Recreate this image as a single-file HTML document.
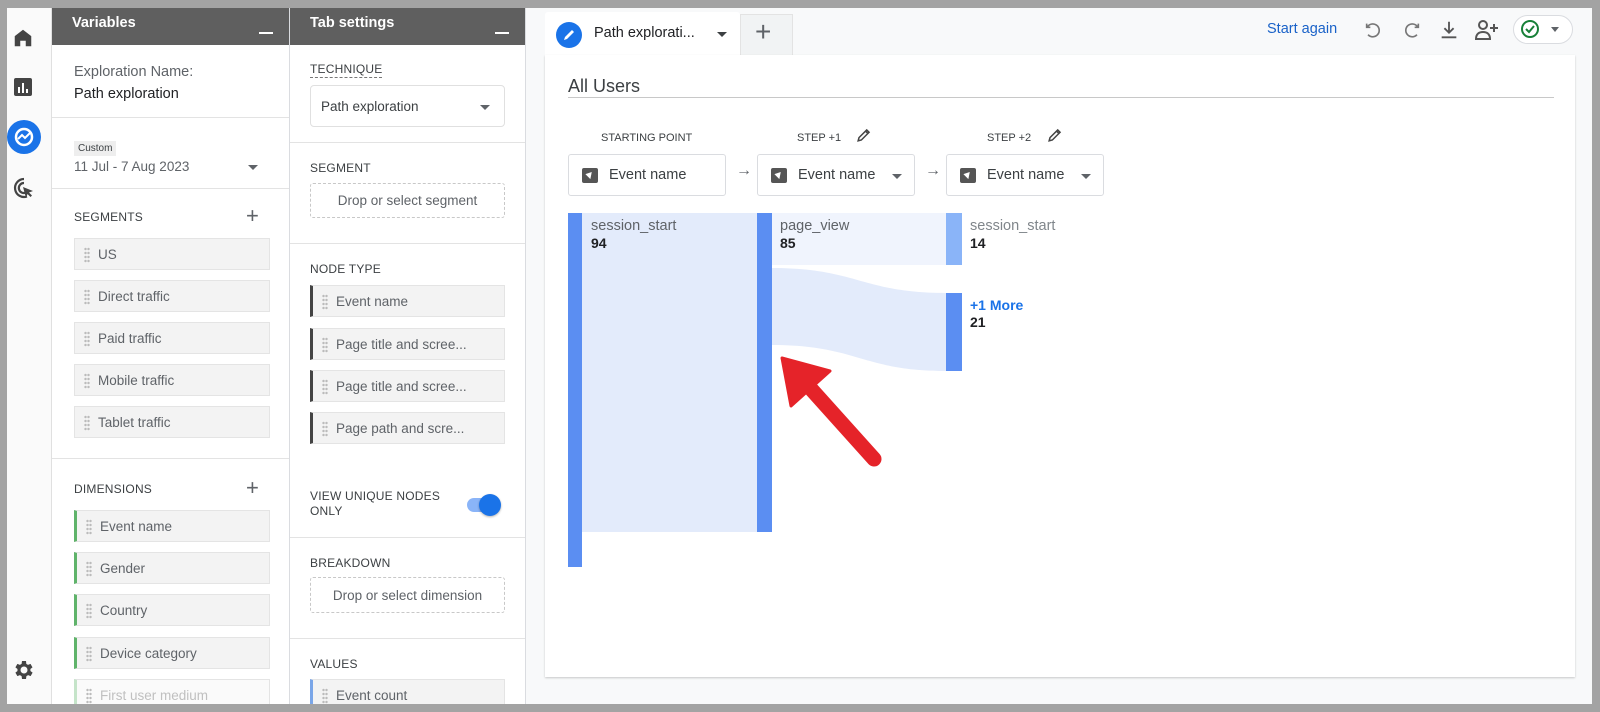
<!DOCTYPE html>
<html><head><meta charset="utf-8"><style>
*{box-sizing:border-box;margin:0;padding:0}
body{width:1600px;height:712px;background:#a3a3a3;font-family:"Liberation Sans",Arial,sans-serif;position:relative;overflow:hidden;color:#3c4043}
.abs{position:absolute}
#frame{position:absolute;left:7px;top:8px;width:1585px;height:696px;background:#f8f9fa;overflow:hidden}
.nav{left:0;top:0;width:45px;height:696px;background:#fafafa;border-right:1px solid #e0e0e0}
.panel{top:0;height:696px;background:#fff;border-right:1px solid #dadce0}
.hdr{position:absolute;left:0;top:0;right:0;height:37px;background:#5f5f5f;color:#fff;font-weight:bold;font-size:14.5px;padding:7px 0 0 20px}
.hdr i{position:absolute;right:16px;top:24px;width:14px;height:2px;background:#fff}
.lbl{position:absolute;font-size:12px;color:#3c4043;letter-spacing:.2px}
.item{position:absolute;height:32px;background:#f3f3f3;border:1px solid #e4e4e4;font-size:13.5px;color:#5f6368;padding:8px 0 0 23px}
.item:before{content:"";position:absolute;left:9px;top:8px;width:6px;height:16px;background:radial-gradient(circle,#bbb 1px,transparent 1.4px) 0 0/3px 4px}
.dim{border-left:3px solid #5fb36a}
.nt{border-left:3px solid #444}
.dv{position:absolute;height:1px;background:#e3e3e3}
.drop{position:absolute;border:1px dashed #c8c8c8;border-radius:3px;font-size:13.5px;color:#5f6368;text-align:center}
.ev{position:absolute;top:146px;height:42px;background:#fff;border:1px solid #dadce0;border-radius:3px;font-size:14.5px;color:#3c4043;padding:12px 0 0 40px}
.ev b{position:absolute;left:13px;top:13px;width:16px;height:15px;background:#555;border-radius:2px}
.ev b:after{content:"";position:absolute;left:5px;top:3px;border-left:6px solid #fff;border-bottom:4px solid transparent;border-top:3px solid transparent;transform:rotate(-45deg)}
.ev s{position:absolute;right:12px;top:19px;border-left:5px solid transparent;border-right:5px solid transparent;border-top:5px solid #5f6368}
.st{position:absolute;font-size:11px;color:#3c4043}
</style></head><body>
<div id="frame">
 <div class="abs nav">
  <svg class="abs" style="left:5px;top:19px" width="22" height="22" viewBox="0 0 24 24"><path d="M12 3L3 10v11h6v-6h6v6h6V10z" fill="#444"/></svg>
  <svg class="abs" style="left:6px;top:69px" width="20" height="20" viewBox="0 0 20 20"><rect x="1" y="1" width="18" height="18" rx="2" fill="#444"/><rect x="5" y="10" width="2" height="6" fill="#fff"/><rect x="9" y="6" width="2" height="10" fill="#fff"/><rect x="13" y="12" width="2" height="4" fill="#fff"/></svg>
  <div class="abs" style="left:0;top:112px;width:34px;height:34px;border-radius:50%;background:#1a73e8"></div>
  <svg class="abs" style="left:5px;top:117px" width="24" height="24" viewBox="0 0 24 24"><circle cx="12" cy="12" r="8" fill="none" stroke="#fff" stroke-width="2.5"/><path d="M6 14l4-4 3 3 5-5" fill="none" stroke="#fff" stroke-width="2"/></svg>
  <svg class="abs" style="left:5px;top:168px" width="24" height="24" viewBox="0 0 24 24"><path d="M12 3a9 9 0 1 0 3 17.5M12 7a5 5 0 1 0 2 9.5" fill="none" stroke="#444" stroke-width="2.2"/><path d="M11 11l10 4-4 1.5 3 3-1.5 1.5-3-3-1.5 4z" fill="#444"/></svg>
  <svg class="abs" style="left:4px;top:650px" width="24" height="24" viewBox="0 0 24 24"><path fill="#444" d="M19.4 13a7.5 7.5 0 0 0 0-2l2.1-1.6-2-3.5-2.5 1a7 7 0 0 0-1.7-1L15 3h-4l-.4 2.9a7 7 0 0 0-1.7 1l-2.5-1-2 3.5L6.5 11a7.5 7.5 0 0 0 0 2l-2.1 1.6 2 3.5 2.5-1a7 7 0 0 0 1.7 1L11 21h4l.4-2.9a7 7 0 0 0 1.7-1l2.5 1 2-3.5zM13 15.5a3.5 3.5 0 1 1 0-7 3.5 3.5 0 0 1 0 7z"/></svg>
 </div>

 <div class="abs panel" style="left:45px;width:238px">
  <div class="hdr">Variables<i></i></div>
  <div class="abs" style="left:22px;top:56px;font-size:14.5px;color:#5f6368">Exploration Name:</div>
  <div class="abs" style="left:22px;top:78px;font-size:14.5px;color:#202124">Path exploration</div>
  <div class="dv" style="left:0;right:0;top:109px"></div>
  <div class="abs" style="left:22px;top:133px;font-size:10px;background:#eee;padding:2px 4px;color:#3c4043">Custom</div>
  <div class="abs" style="left:22px;top:151px;font-size:13.5px;color:#5f6368">11 Jul - 7 Aug 2023</div>
  <div class="abs" style="left:196px;top:157px;border-left:5px solid transparent;border-right:5px solid transparent;border-top:5px solid #5f6368"></div>
  <div class="dv" style="left:0;right:0;top:180px"></div>
  <div class="lbl" style="left:22px;top:202px">SEGMENTS</div>
  <div class="abs" style="left:194px;top:199px;font-size:22px;color:#5f6368;line-height:18px">+</div>
  <div class="item" style="left:22px;top:230px;width:196px">US</div>
  <div class="item" style="left:22px;top:272px;width:196px">Direct traffic</div>
  <div class="item" style="left:22px;top:314px;width:196px">Paid traffic</div>
  <div class="item" style="left:22px;top:356px;width:196px">Mobile traffic</div>
  <div class="item" style="left:22px;top:398px;width:196px">Tablet traffic</div>
  <div class="dv" style="left:0;right:0;top:450px"></div>
  <div class="lbl" style="left:22px;top:474px">DIMENSIONS</div>
  <div class="abs" style="left:194px;top:471px;font-size:22px;color:#5f6368;line-height:18px">+</div>
  <div class="item dim" style="left:22px;top:502px;width:196px">Event name</div>
  <div class="item dim" style="left:22px;top:544px;width:196px">Gender</div>
  <div class="item dim" style="left:22px;top:586px;width:196px">Country</div>
  <div class="item dim" style="left:22px;top:629px;width:196px">Device category</div>
  <div class="item dim" style="left:22px;top:671px;width:196px;color:#c0c0c0;border-left-color:#c5e4c9;background:#fafafa">First user medium</div>
 </div>

 <div class="abs panel" style="left:283px;width:236px">
  <div class="hdr">Tab settings<i></i></div>
  <div class="lbl" style="left:20px;top:54px;border-bottom:1px dashed #777;padding-bottom:1px">TECHNIQUE</div>
  <div class="abs" style="left:20px;top:77px;width:195px;height:42px;border:1px solid #e0e0e0;border-radius:4px;font-size:13.5px;color:#3c4043;padding:13px 0 0 10px">Path exploration<span style="position:absolute;right:14px;top:19px;border-left:5px solid transparent;border-right:5px solid transparent;border-top:5px solid #5f6368"></span></div>
  <div class="dv" style="left:0;right:0;top:134px"></div>
  <div class="lbl" style="left:20px;top:153px">SEGMENT</div>
  <div class="drop" style="left:20px;top:175px;width:195px;height:35px;padding-top:9px">Drop or select segment</div>
  <div class="dv" style="left:0;right:0;top:235px"></div>
  <div class="lbl" style="left:20px;top:254px">NODE TYPE</div>
  <div class="item nt" style="left:20px;top:277px;width:195px">Event name</div>
  <div class="item nt" style="left:20px;top:320px;width:195px">Page title and scree...</div>
  <div class="item nt" style="left:20px;top:362px;width:195px">Page title and scree...</div>
  <div class="item nt" style="left:20px;top:404px;width:195px">Page path and scre...</div>
  <div class="lbl" style="left:20px;top:481px;line-height:15px">VIEW UNIQUE NODES<br>ONLY</div>
  <div class="abs" style="left:177px;top:490px;width:30px;height:14px;border-radius:7px;background:#8ab4f8"></div>
  <div class="abs" style="left:189px;top:486px;width:22px;height:22px;border-radius:50%;background:#1a73e8;box-shadow:0 1px 2px rgba(0,0,0,.3)"></div>
  <div class="dv" style="left:0;right:0;top:529px"></div>
  <div class="lbl" style="left:20px;top:548px">BREAKDOWN</div>
  <div class="drop" style="left:20px;top:569px;width:195px;height:36px;padding-top:10px">Drop or select dimension</div>
  <div class="dv" style="left:0;right:0;top:630px"></div>
  <div class="lbl" style="left:20px;top:649px">VALUES</div>
  <div class="item" style="left:20px;top:671px;width:195px;border-left:3px solid #7aa6e8">Event count</div>
 </div>

 <!-- tabs -->
 <div class="abs" style="left:538px;top:4px;width:195px;height:44px;background:#fff;border-radius:3px 3px 0 0"></div>
 <div class="abs" style="left:549px;top:14px;width:26px;height:26px;border-radius:50%;background:#1a73e8"></div>
 <svg class="abs" style="left:555px;top:20px" width="14" height="14" viewBox="0 0 14 14"><path d="M2 12l1-3 7-7 2 2-7 7z" fill="#fff"/></svg>
 <div class="abs" style="left:587px;top:17px;font-size:14.5px;color:#202124">Path explorati...</div>
 <div class="abs" style="left:710px;top:24px;border-left:5px solid transparent;border-right:5px solid transparent;border-top:5px solid #3c4043"></div>
 <div class="abs" style="left:733px;top:6px;width:53px;height:42px;background:#f1f3f4;border:1px solid #e3e3e3;border-bottom:none"></div>
 <div class="abs" style="left:748px;top:8px;font-size:28px;color:#5f6368;font-weight:300">+</div>
 <div class="abs" style="left:1260px;top:13px;font-size:14.5px;color:#1a62c8">Start again</div>
 <svg class="abs" style="left:1356px;top:12px" width="22" height="22" viewBox="0 0 24 24"><path d="M8 8H4V4M4.5 8a7 7 0 1 1 1 8" fill="none" stroke="#777" stroke-width="1.8"/></svg>
 <svg class="abs" style="left:1393px;top:12px" width="22" height="22" viewBox="0 0 24 24"><path d="M16 8h4V4M19.5 8a7 7 0 1 0-1 8" fill="none" stroke="#777" stroke-width="1.8"/></svg>
 <svg class="abs" style="left:1431px;top:11px" width="22" height="22" viewBox="0 0 24 24"><path d="M12 3v12M7 10l5 5 5-5M4 20h16" fill="none" stroke="#555" stroke-width="2"/></svg>
 <svg class="abs" style="left:1467px;top:11px" width="26" height="22" viewBox="0 0 26 22"><circle cx="9" cy="6" r="4" fill="none" stroke="#555" stroke-width="2"/><path d="M2 20c0-5 3-7 7-7s7 2 7 7z" fill="none" stroke="#555" stroke-width="2"/><path d="M20 5v8M16 9h8" stroke="#555" stroke-width="2"/></svg>
 <div class="abs" style="left:1506px;top:7px;width:60px;height:29px;border:1px solid #dadce0;border-radius:15px;background:#fff"></div>
 <svg class="abs" style="left:1513px;top:11px" width="20" height="20" viewBox="0 0 20 20"><circle cx="10" cy="10" r="8" fill="none" stroke="#188038" stroke-width="2"/><path d="M6 10l3 3 5-6" fill="none" stroke="#188038" stroke-width="2"/></svg>
 <div class="abs" style="left:1544px;top:19px;border-left:4px solid transparent;border-right:4px solid transparent;border-top:5px solid #5f6368"></div>

 <!-- card -->
 <div class="abs" style="left:538px;top:47px;width:1030px;height:622px;background:#fff;box-shadow:0 1px 2px rgba(0,0,0,.2)"></div>
 <div class="abs" style="left:561px;top:68px;font-size:18px;color:#3c4043">All Users</div>
 <div class="abs" style="left:561px;top:89px;width:986px;height:1px;background:#c8c8c8"></div>
 <div class="st" style="left:594px;top:124px">STARTING POINT</div>
 <div class="st" style="left:790px;top:124px">STEP +1</div>
 <svg class="abs" style="left:849px;top:120px" width="15" height="15" viewBox="0 0 14 14"><path d="M2 12l.8-3L10 1.8 12.2 4 5 11.2zM9 3l2 2" fill="none" stroke="#444" stroke-width="1.4"/></svg>
 <div class="st" style="left:980px;top:124px">STEP +2</div>
 <svg class="abs" style="left:1040px;top:120px" width="15" height="15" viewBox="0 0 14 14"><path d="M2 12l.8-3L10 1.8 12.2 4 5 11.2zM9 3l2 2" fill="none" stroke="#444" stroke-width="1.4"/></svg>
 <div class="ev" style="left:561px;width:158px"><b></b>Event name</div>
 <div class="abs" style="left:729px;top:154px;font-size:16px;color:#5f6368">→</div>
 <div class="ev" style="left:750px;width:158px"><b></b>Event name<s></s></div>
 <div class="abs" style="left:918px;top:154px;font-size:16px;color:#5f6368">→</div>
 <div class="ev" style="left:939px;width:158px"><b></b>Event name<s></s></div>

 <svg class="abs" style="left:0;top:0" width="1585" height="696">
  <rect x="575" y="205" width="175" height="319" fill="#e3ebfb"/>
  <rect x="765" y="205" width="174" height="52" fill="#f0f4fd"/>
  <path d="M765 260 C850 260 855 285 939 285 L939 363 C855 363 850 337 765 337 Z" fill="#e3ebfb"/>
  <rect x="561" y="205" width="14" height="354" fill="#5b8ef2"/>
  <rect x="750" y="205" width="15" height="319" fill="#5b8ef2"/>
  <rect x="939" y="205" width="16" height="52" fill="#8ab4f8"/>
  <rect x="939" y="285" width="16" height="78" fill="#5b8ef2"/>
  <line x1="805" y1="382" x2="867" y2="451" stroke="#e52329" stroke-width="15" stroke-linecap="round"/>
  <path d="M775 350 L784 398 L823 363 Z" fill="#e52329" stroke="#e52329" stroke-width="3" stroke-linejoin="round"/>
 </svg>
 <div class="abs" style="left:584px;top:210px;font-size:14.5px;color:#5f6368">session_start</div>
 <div class="abs" style="left:584px;top:227px;font-size:14px;font-weight:bold;color:#202124">94</div>
 <div class="abs" style="left:773px;top:210px;font-size:14.5px;color:#5f6368">page_view</div>
 <div class="abs" style="left:773px;top:227px;font-size:14px;font-weight:bold;color:#202124">85</div>
 <div class="abs" style="left:963px;top:210px;font-size:14.5px;color:#80868b">session_start</div>
 <div class="abs" style="left:963px;top:227px;font-size:14px;font-weight:bold;color:#202124">14</div>
 <div class="abs" style="left:963px;top:289px;font-size:14px;font-weight:bold;color:#1a73e8">+1 More</div>
 <div class="abs" style="left:963px;top:306px;font-size:14px;font-weight:bold;color:#202124">21</div>
</div>
</body></html>
